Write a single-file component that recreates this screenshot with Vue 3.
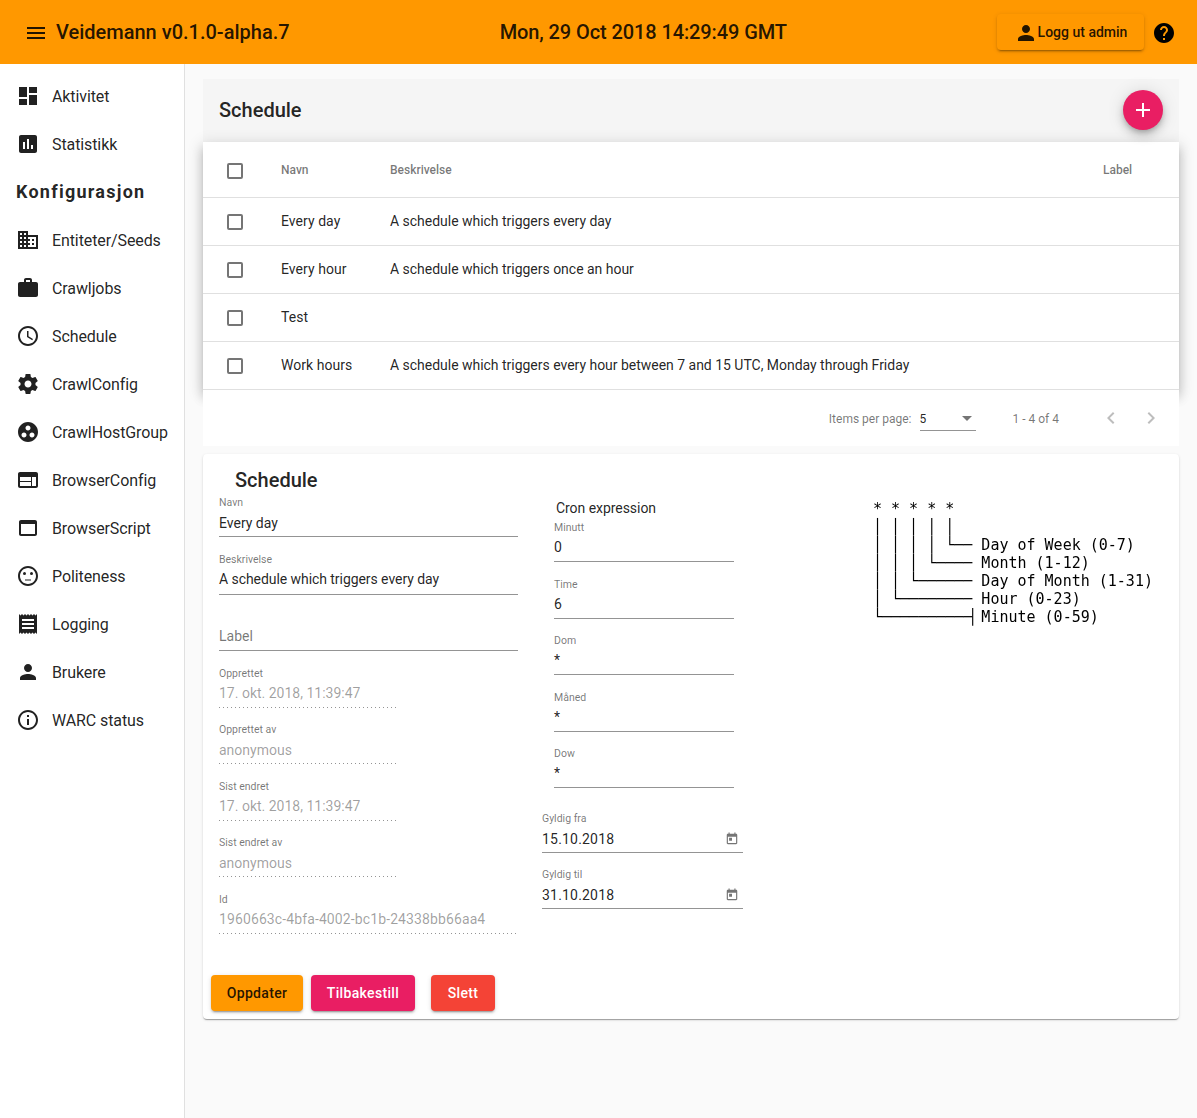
<script setup>
// material icon paths
const icons = {
  dashboard: "M3 13h8V3H3v10zm0 8h8v-6H3v6zm10 0h8V11h-8v10zm0-18v6h8V3h-8z",
  assessment: "M19 3H5c-1.1 0-2 .9-2 2v14c0 1.1.9 2 2 2h14c1.1 0 2-.9 2-2V5c0-1.1-.9-2-2-2zM9 17H7v-7h2v7zm4 0h-2V7h2v10zm4 0h-2v-4h2v4z",
  domain: "M12 7V3H2v18h20V7H12zM6 19H4v-2h2v2zm0-4H4v-2h2v2zm0-4H4V9h2v2zm0-4H4V5h2v2zm4 12H8v-2h2v2zm0-4H8v-2h2v2zm0-4H8V9h2v2zm0-4H8V5h2v2zm10 12h-8v-2h2v-2h-2v-2h2v-2h-2V9h8v10zm-2-8h-2v2h2v-2zm0 4h-2v2h2v-2z",
  work: "M20 6h-4V4c0-1.11-.89-2-2-2h-4c-1.11 0-2 .89-2 2v2H4c-1.11 0-1.99.89-1.99 2L2 19c0 1.11.89 2 2 2h16c1.11 0 2-.89 2-2V8c0-1.11-.89-2-2-2zm-6 0h-4V4h4v2z",
  schedule: "M11.99 2C6.47 2 2 6.48 2 12s4.47 10 9.99 10C17.52 22 22 17.52 22 12S17.52 2 11.99 2zM12 20c-4.42 0-8-3.58-8-8s3.58-8 8-8 8 3.58 8 8-3.58 8-8 8zm.5-13H11v6l5.25 3.15.75-1.23-4.5-2.67z",
  settings: "M19.43 12.98c.04-.32.07-.64.07-.98s-.03-.66-.07-.98l2.11-1.65c.19-.15.24-.42.12-.64l-2-3.46c-.12-.22-.39-.3-.61-.22l-2.49 1c-.52-.4-1.08-.73-1.69-.98l-.38-2.65C14.46 2.18 14.25 2 14 2h-4c-.25 0-.46.18-.49.42l-.38 2.65c-.61.25-1.17.59-1.69.98l-2.49-1c-.23-.09-.49 0-.61.22l-2 3.46c-.13.22-.07.49.12.64l2.11 1.65c-.04.32-.07.65-.07.98s.03.66.07.98l-2.11 1.65c-.19.15-.24.42-.12.64l2 3.46c.12.22.39.3.61.22l2.49-1c.52.4 1.08.73 1.69.98l.38 2.65c.03.24.24.42.49.42h4c.25 0 .46-.18.49-.42l.38-2.65c.61-.25 1.17-.59 1.69-.98l2.49 1c.23.09.49 0 .61-.22l2-3.46c.12-.22.07-.49-.12-.64l-2.11-1.65zM12 15.5c-1.93 0-3.5-1.57-3.5-3.5s1.57-3.5 3.5-3.5 3.5 1.57 3.5 3.5-1.57 3.5-3.5 3.5z",
  group: "M12 2C6.48 2 2 6.48 2 12s4.48 10 10 10 10-4.48 10-10S17.52 2 12 2zM8 17.5c-1.38 0-2.5-1.12-2.5-2.5s1.12-2.5 2.5-2.5 2.5 1.12 2.5 2.5-1.12 2.5-2.5 2.5zM9.5 8c0-1.38 1.12-2.5 2.5-2.5s2.5 1.12 2.5 2.5-1.12 2.5-2.5 2.5S9.5 9.38 9.5 8zm6.5 9.5c-1.38 0-2.5-1.12-2.5-2.5s1.12-2.5 2.5-2.5 2.5 1.12 2.5 2.5-1.12 2.5-2.5 2.5z",
  web: "M20 4H4c-1.1 0-1.99.9-1.99 2L2 18c0 1.1.9 2 2 2h16c1.1 0 2-.9 2-2V6c0-1.1-.9-2-2-2zm-5 14H4v-4h11v4zm0-5H4V9h11v4zm5 5h-4V9h4v9z",
  asset: "M19 4H5c-1.11 0-2 .9-2 2v12c0 1.1.89 2 2 2h14c1.1 0 2-.9 2-2V6c0-1.1-.89-2-2-2zm0 14H5V8h14v10z",
  neutral: "M9 15.5h6v1H9zM15.5 8a1.5 1.5 0 1 1 0 3 1.5 1.5 0 0 1 0-3zM8.5 8a1.5 1.5 0 1 1 0 3 1.5 1.5 0 0 1 0-3zM11.99 2C6.47 2 2 6.48 2 12s4.47 10 9.99 10C17.52 22 22 17.52 22 12S17.52 2 11.99 2zM12 20c-4.42 0-8-3.58-8-8s3.58-8 8-8 8 3.58 8 8-3.58 8-8 8z",
  receipt: "M18 17H6v-2h12v2zm0-4H6v-2h12v2zm0-4H6V7h12v2zM3 22l1.5-1.5L6 22l1.5-1.5L9 22l1.5-1.5L12 22l1.5-1.5L15 22l1.5-1.5L18 22l1.5-1.5L21 22V2l-1.5 1.5L18 2l-1.5 1.5L15 2l-1.5 1.5L12 2l-1.5 1.5L9 2 7.5 3.5 6 2 4.5 3.5 3 2v20z",
  person: "M12 12c2.21 0 4-1.79 4-4s-1.79-4-4-4-4 1.79-4 4 1.79 4 4 4zm0 2c-2.67 0-8 1.34-8 4v2h16v-2c0-2.66-5.33-4-8-4z",
  info: "M11 17h2v-6h-2v6zm1-15C6.48 2 2 6.48 2 12s4.48 10 10 10 10-4.48 10-10S17.52 2 12 2zm0 18c-4.41 0-8-3.59-8-8s3.59-8 8-8 8 3.59 8 8-3.59 8-8 8zM11 9h2V7h-2v2z",
  menu: "M3 18h18v-2H3v2zm0-5h18v-2H3v2zm0-7v2h18V6H3z",
  help: "M12 2C6.48 2 2 6.48 2 12s4.48 10 10 10 10-4.48 10-10S17.52 2 12 2zm1 17h-2v-2h2v2zm2.07-7.75l-.9.92C13.45 12.9 13 13.5 13 15h-2v-.5c0-1.1.45-2.1 1.17-2.83l1.24-1.26c.37-.36.59-.86.59-1.41 0-1.1-.9-2-2-2s-2 .9-2 2H8c0-2.21 1.79-4 4-4s4 1.79 4 4c0 .88-.36 1.68-.93 2.25z",
  add: "M19 13h-6v6h-2v-6H5v-2h6V5h2v6h6v2z",
  left: "M15.41 7.41L14 6l-6 6 6 6 1.41-1.41L10.83 12z",
  right: "M10 6L8.59 7.41 13.17 12l-4.58 4.59L10 18l6-6z",
  calendar: "M19 3h-1V1h-2v2H8V1H6v2H5c-1.11 0-1.99.9-1.99 2L3 19c0 1.1.89 2 2 2h14c1.1 0 2-.9 2-2V5c0-1.1-.9-2-2-2zm0 16H5V8h14v11zM7 10h5v5H7z",
};

const navTop = [
  { icon: "dashboard", text: "Aktivitet" },
  { icon: "assessment", text: "Statistikk" },
];
const navConfig = [
  { icon: "domain", text: "Entiteter/Seeds" },
  { icon: "work", text: "Crawljobs" },
  { icon: "schedule", text: "Schedule" },
  { icon: "settings", text: "CrawlConfig" },
  { icon: "group", text: "CrawlHostGroup" },
  { icon: "web", text: "BrowserConfig" },
  { icon: "asset", text: "BrowserScript" },
  { icon: "neutral", text: "Politeness" },
  { icon: "receipt", text: "Logging" },
  { icon: "person", text: "Brukere" },
  { icon: "info", text: "WARC status" },
];

const rows = [
  { name: "Every day", desc: "A schedule which triggers every day" },
  { name: "Every hour", desc: "A schedule which triggers once an hour" },
  { name: "Test", desc: "" },
  { name: "Work hours", desc: "A schedule which triggers every hour between 7 and 15 UTC, Monday through Friday" },
];

const metaFields = [
  { label: "Opprettet", value: "17. okt. 2018, 11:39:47" },
  { label: "Opprettet av", value: "anonymous" },
  { label: "Sist endret", value: "17. okt. 2018, 11:39:47" },
  { label: "Sist endret av", value: "anonymous" },
];

const cronFields = [
  { label: "Minutt", value: "0" },
  { label: "Time", value: "6" },
  { label: "Dom", value: "*" },
  { label: "Måned", value: "*" },
  { label: "Dow", value: "*" },
];

const dateFields = [
  { label: "Gyldig fra", value: "15.10.2018" },
  { label: "Gyldig til", value: "31.10.2018" },
];

// the last line ends in a bar at the left edge of its cell, a ┤ would sit too far left
const cronHelp = `* * * * *
│ │ │ │ │
│ │ │ │ └── Day of Week (0-7)
│ │ │ └──── Month (1-12)
│ │ └────── Day of Month (1-31)
│ └──────── Hour (0-23)
└──────────▏Minute (0-59)`;
</script>

<template>
  <div class="app">
    <header class="topbar">
      <svg class="icon menu-icon" viewBox="0 0 24 24"><path :d="icons.menu" /></svg>
      <span class="app-title">Veidemann v0.1.0-alpha.7</span>
      <span class="spacer"></span>
      <span class="app-title clock">Mon, 29 Oct 2018 14:29:49 GMT</span>
      <span class="spacer"></span>
      <button class="logout">
        <svg class="icon" viewBox="0 0 24 24"><path :d="icons.person" /></svg>
        <span>Logg ut admin</span>
      </button>
      <svg class="icon help-icon" viewBox="0 0 24 24"><path :d="icons.help" /></svg>
    </header>

    <div class="body">
      <nav class="sidenav">
        <a v-for="item in navTop" :key="item.text" class="nav-item">
          <svg class="icon" viewBox="0 0 24 24"><path :d="icons[item.icon]" /></svg>
          <span>{{ item.text }}</span>
        </a>
        <div class="nav-head">Konfigurasjon</div>
        <a v-for="item in navConfig" :key="item.text" class="nav-item">
          <svg class="icon" viewBox="0 0 24 24"><path :d="icons[item.icon]" /></svg>
          <span>{{ item.text }}</span>
        </a>
      </nav>

      <main class="content">
        <div class="toolbar">
          <span class="toolbar-title">Schedule</span>
          <button class="fab">
            <svg class="icon" viewBox="0 0 24 24"><path :d="icons.add" /></svg>
          </button>
        </div>

        <div class="table">
          <div class="row head">
            <span class="check"></span>
            <span class="col-name">Navn</span>
            <span class="col-desc">Beskrivelse</span>
            <span class="col-label">Label</span>
          </div>
          <div v-for="row in rows" :key="row.name" class="row">
            <span class="check"></span>
            <span class="col-name">{{ row.name }}</span>
            <span class="col-desc">{{ row.desc }}</span>
            <span class="col-label"></span>
          </div>
        </div>

        <div class="paginator">
          <span class="page-text">Items per page:</span>
          <div class="page-select">
            <span>5</span>
            <i class="caret"></i>
          </div>
          <span class="page-text range">1 - 4 of 4</span>
          <svg class="icon page-btn" viewBox="0 0 24 24"><path :d="icons.left" /></svg>
          <svg class="icon page-btn" viewBox="0 0 24 24"><path :d="icons.right" /></svg>
        </div>

        <section class="card">
          <h2 class="card-title">Schedule</h2>
          <div class="form">
            <div class="col-main">
              <div class="field first">
                <label>Navn</label>
                <div class="value">Every day</div>
              </div>
              <div class="field second">
                <label>Beskrivelse</label>
                <div class="value tight">A schedule which triggers every day</div>
              </div>
              <div class="field">
                <label></label>
                <div class="value placeholder">Label</div>
              </div>
              <div v-for="f in metaFields" :key="f.label" class="field disabled short">
                <label>{{ f.label }}</label>
                <div class="value">{{ f.value }}</div>
              </div>
              <div class="field disabled">
                <label>Id</label>
                <div class="value wide">1960663c-4bfa-4002-bc1b-24338bb66aa4</div>
              </div>
            </div>

            <div class="col-cron">
              <div class="cron-head">Cron expression</div>
              <div class="cron-fields">
                <div v-for="f in cronFields" :key="f.label" class="field">
                  <label>{{ f.label }}</label>
                  <div class="value raised">{{ f.value }}</div>
                </div>
              </div>
              <div v-for="f in dateFields" :key="f.label" class="field date">
                <label>{{ f.label }}</label>
                <div class="value">
                  <span class="date-text">{{ f.value }}</span>
                  <svg class="icon cal" viewBox="0 0 24 24"><path :d="icons.calendar" /></svg>
                </div>
              </div>
            </div>

            <pre class="cron-help">{{ cronHelp }}</pre>
          </div>

          <div class="actions">
            <button class="btn orange">Oppdater</button>
            <button class="btn pink">Tilbakestill</button>
            <button class="btn red">Slett</button>
          </div>
        </section>
      </main>
    </div>
  </div>
</template>

<style scoped>
.app {
  height: 1118px;
  display: flex;
  flex-direction: column;
  overflow: hidden;
  font-family: Roboto, "Liberation Sans", sans-serif;
  color: rgba(0, 0, 0, 0.87);
  background: #fafafa;
}
.icon {
  width: 24px;
  height: 24px;
  fill: currentColor;
  flex: none;
  display: block;
}

.topbar {
  height: 64px;
  flex: none;
  display: flex;
  align-items: center;
  padding: 2px 21px 0 24px;
  box-sizing: border-box;
  background: #ff9800;
}
.menu-icon {
  margin-right: 8px;
}
.app-title {
  font-size: 20px;
  font-weight: 500;
  margin-top: -2px;
}
.clock {
  letter-spacing: -0.1px;
}
.spacer {
  flex: 1;
}
.logout {
  height: 36px;
  width: 147px;
  margin: -2px 8px 0 0;
  display: flex;
  align-items: center;
  justify-content: center;
  border: 0;
  border-radius: 4px;
  background: #ff9800;
  color: rgba(0, 0, 0, 0.87);
  font: 500 14px Roboto, sans-serif;
  box-shadow: 0 3px 1px -2px rgba(0, 0, 0, 0.2), 0 2px 2px 0 rgba(0, 0, 0, 0.14), 0 1px 5px 0 rgba(0, 0, 0, 0.12);
}
.logout .icon {
  margin-top: 2px;
}
.help-icon {
  color: #000;
}

.body {
  flex: 1;
  display: flex;
  min-height: 0;
}
.sidenav {
  width: 185px;
  flex: none;
  box-sizing: border-box;
  padding-top: 8px;
  background: #fff;
  border-right: 1px solid #e0e0e0;
}
.nav-item {
  height: 48px;
  display: flex;
  align-items: center;
  gap: 12px;
  padding-left: 16px;
  font-size: 16px;
  letter-spacing: -0.1px;
}
.nav-head {
  height: 48px;
  line-height: 48px;
  padding-left: 16px;
  font-size: 18px;
  font-weight: 700;
  letter-spacing: 1.25px;
}

.content {
  flex: 1;
  min-width: 0;
  padding: 15px 18px 0;
}
.toolbar {
  height: 63px;
  box-sizing: border-box;
  display: flex;
  align-items: center;
  justify-content: space-between;
  padding: 0 16px 1px;
  background: #f5f5f5;
}
.toolbar-title {
  font-size: 20px;
  font-weight: 500;
}
.fab {
  width: 40px;
  height: 40px;
  padding: 8px;
  border: 0;
  border-radius: 50%;
  background: #e91e63;
  color: #fff;
  box-shadow: 0 3px 5px -1px rgba(0, 0, 0, 0.2), 0 6px 10px 0 rgba(0, 0, 0, 0.14), 0 1px 18px 0 rgba(0, 0, 0, 0.12);
}

.table {
  background: #fff;
  box-shadow: 0 5px 5px -3px rgba(0, 0, 0, 0.2), 0 8px 10px 1px rgba(0, 0, 0, 0.14), 0 3px 14px 2px rgba(0, 0, 0, 0.12);
}
.row {
  height: 48px;
  display: flex;
  align-items: center;
  padding-left: 24px;
  box-sizing: border-box;
  border-bottom: 1px solid #e0e0e0;
  font-size: 14px;
}
.row .col-name,
.row .col-desc {
  margin-bottom: 2px;
}
.row .col-name {
  letter-spacing: 0.05px;
}
.row .col-desc {
  letter-spacing: -0.02px;
}
.row.head {
  height: 56px;
  font-size: 12px;
  font-weight: 500;
  color: rgba(0, 0, 0, 0.54);
}
.row.head .col-name,
.row.head .col-desc {
  margin-bottom: 0;
  letter-spacing: 0;
}
.row.head .check {
  margin-top: 2px;
}
.check {
  width: 12px;
  height: 12px;
  flex: none;
  margin-right: 38px;
  border: 2px solid rgba(0, 0, 0, 0.54);
  border-radius: 2px;
}
.col-name {
  width: 109px;
  flex: none;
}
.col-desc {
  flex: 1;
}
.col-label {
  width: 76px;
  flex: none;
}

.paginator {
  position: relative;
  height: 56px;
  display: flex;
  align-items: center;
  padding-right: 8px;
  justify-content: flex-end;
  background: #fff;
  font-size: 12px;
  color: rgba(0, 0, 0, 0.54);
}
.page-text {
  margin-top: 2px;
}
.page-select {
  width: 56px;
  height: 24px;
  margin: 2px 0 0 8px;
  box-sizing: border-box;
  display: flex;
  align-items: center;
  justify-content: space-between;
  padding: 0 4px 0 0;
  border-bottom: 1px solid rgba(0, 0, 0, 0.42);
  color: rgba(0, 0, 0, 0.87);
}
.caret {
  width: 0;
  height: 0;
  border-left: 5px solid transparent;
  border-right: 5px solid transparent;
  border-top: 5px solid rgba(0, 0, 0, 0.54);
}
.range {
  margin: 2px 32px 0 37px;
}
.page-btn {
  color: rgba(0, 0, 0, 0.26);
  padding: 8px;
}

.card {
  margin-top: 8px;
  height: 565px;
  box-sizing: border-box;
  padding: 14px 8px 8px;
  background: #fff;
  border-radius: 4px;
  display: flex;
  flex-direction: column;
  box-shadow: 0 2px 1px -1px rgba(0, 0, 0, 0.2), 0 1px 1px 0 rgba(0, 0, 0, 0.14), 0 1px 3px 0 rgba(0, 0, 0, 0.12);
}
.card-title {
  margin: 0 0 3.5px 24px;
  font-size: 20px;
  font-weight: 500;
  line-height: 24px;
}
.form {
  display: flex;
  padding-left: 8px;
  flex: 1;
}
.col-main {
  width: 299px;
  flex: none;
}
.col-cron {
  width: 201px;
  margin-left: 24px;
  flex: none;
}
.cron-head {
  margin: 2px 0 3.5px 14px;
  font-size: 14px;
  line-height: 20px;
  letter-spacing: -0.05px;
}
.cron-fields {
  margin: 0 9px 23.5px 12px;
}

.field {
  height: 41px;
  margin-bottom: 15.5px;
  display: flex;
  flex-direction: column;
  box-sizing: border-box;
  border-bottom: 1px solid rgba(0, 0, 0, 0.42);
}
.field.first {
  margin-bottom: 16px;
}
.field.second {
  height: 42px;
}
.field label {
  height: 13px;
  line-height: 13px;
  font-size: 10.5px;
  color: rgba(0, 0, 0, 0.54);
}
.value {
  margin-top: 4px;
  height: 20px;
  line-height: 20px;
  font-size: 14px;
  display: flex;
  align-items: center;
  justify-content: space-between;
}
.value.raised,
.value.tight,
.value.placeholder {
  margin-top: 3px;
}
.value.tight {
  letter-spacing: -0.06px;
}
.value.wide {
  letter-spacing: 0.11px;
}
.date-text {
  letter-spacing: 0.2px;
}
.placeholder {
  color: rgba(0, 0, 0, 0.54);
}
.field.disabled {
  border-bottom: 0;
  background: linear-gradient(to right, rgba(0, 0, 0, 0.42) 0, rgba(0, 0, 0, 0.42) 33%, transparent 0) left bottom / 4px 1px repeat-x;
}
.field.disabled .value {
  margin-top: 3.5px;
  color: rgba(0, 0, 0, 0.38);
}
.field.short {
  width: 178px;
  white-space: nowrap;
}
.cal {
  width: 14px;
  height: 14px;
  margin-right: 4px;
  color: rgba(0, 0, 0, 0.54);
}

.cron-help {
  margin: 4.5px 0 0 130px;
  font-family: "DejaVu Sans Mono", monospace;
  font-size: 15px;
  line-height: 18px;
  color: #000;
  will-change: transform;
}

.actions {
  display: flex;
  gap: 8px;
}
.btn {
  height: 36px;
  padding: 0;
  border: 0;
  border-radius: 4px;
  font: 500 14px Roboto, sans-serif;
  letter-spacing: 0.33px;
  box-shadow: 0 3px 1px -2px rgba(0, 0, 0, 0.2), 0 2px 2px 0 rgba(0, 0, 0, 0.14), 0 1px 5px 0 rgba(0, 0, 0, 0.12);
}
.btn.orange {
  width: 92px;
  background: #ff9800;
  color: rgba(0, 0, 0, 0.87);
}
.btn.pink {
  width: 104px;
  background: #e91e63;
  color: #fff;
}
.btn.red {
  width: 64px;
  margin-left: 8px;
  background: #f44336;
  color: #fff;
}
</style>

<style>
html,
body {
  margin: 0;
  overflow: hidden;
}
</style>
